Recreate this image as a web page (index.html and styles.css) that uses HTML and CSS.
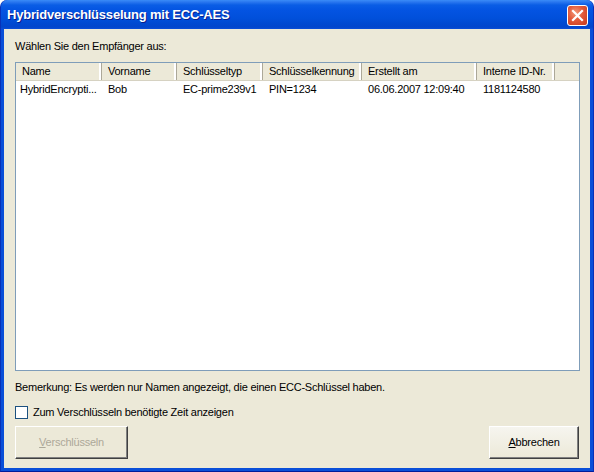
FILE: index.html
```
<!DOCTYPE html>
<html>
<head>
<meta charset="utf-8">
<link rel="stylesheet" href="styles.css">
</head>
<body>
<div class="window">
  <div class="titlebar">
    <span class="title">Hybridverschlüsselung mit ECC-AES</span>
    <span class="close"><svg width="13" height="13" viewBox="0 0 13 13"><path d="M2 2 L11 11 M11 2 L2 11" stroke="#fff" stroke-width="2.2" stroke-linecap="square"/></svg></span>
  </div>
  <div class="client">
    <div class="prompt">Wählen Sie den Empfänger aus:</div>
    <div class="list">
      <div class="header">
        <div class="hcell c1">Name</div>
        <div class="hcell c2">Vorname</div>
        <div class="hcell c3">Schlüsseltyp</div>
        <div class="hcell c4">Schlüsselkennung</div>
        <div class="hcell c5">Erstellt am</div>
        <div class="hcell c6">Interne ID-Nr.</div>
        <div class="hcell c7"></div>
      </div>
      <div class="row">
        <div class="cell c1 first">HybridEncrypti...</div>
        <div class="cell c2">Bob</div>
        <div class="cell c3">EC-prime239v1</div>
        <div class="cell c4">PIN=1234</div>
        <div class="cell c5">06.06.2007 12:09:40</div>
        <div class="cell c6">1181124580</div>
      </div>
    </div>
    <div class="note">Bemerkung: Es werden nur Namen angezeigt, die einen ECC-Schlüssel haben.</div>
    <label class="check"><span class="box"></span>Zum Verschlüsseln benötigte Zeit anzeigen</label>
    <div class="buttons">
      <div class="btn disabled"><u>V</u>erschlüsseln</div>
      <div class="btn"><u>A</u>bbrechen</div>
    </div>
  </div>
</div>
</body>
</html>
```
FILE: styles.css
```
html, body { margin: 0; padding: 0; }
body { width: 594px; height: 472px; overflow: hidden; font-family: Tahoma, "Liberation Sans", Arial, sans-serif; font-size: 11px; letter-spacing: -0.24px; color: #000; }
.window {
  width: 594px; height: 472px; box-sizing: border-box;
  background: #0a4fd8;
  display: flex; flex-direction: column;
  border-radius: 7px 7px 0 0;
  border-left: 1px solid #0831b8; border-right: 1px solid #0831b8; border-bottom: 1px solid #001c9a;
  padding: 0 3px 3px 3px;
}
.titlebar {
  height: 29px; flex: none;
  margin: 0 -3px;
  border-radius: 7px 7px 0 0;
  background: linear-gradient(to bottom, #3a8cf8 0px, #2a77ef 2px, #0a5de5 5px, #0454e2 10px, #0150db 18px, #0049d0 24px, #0246cc 27px, #0a4fd8 29px);
  display: flex; align-items: center; justify-content: space-between;
  padding: 0 5px 0 6px;
}
.title {
  color: #fff; font-family: "Liberation Sans", Arial, sans-serif; font-weight: bold; font-size: 13px;
  text-shadow: 1px 1px 0 #0a1e8c;
  letter-spacing: -0.2px;
}
.close {
  width: 19px; height: 19px; border: 1px solid #fff; border-radius: 3px;
  background: radial-gradient(circle at 40% 35%, #f39a7a 0%, #e2593a 45%, #c63a1c 100%);
  display: flex; align-items: center; justify-content: center;
  margin-top: 1px;
}
.client {
  flex: 1; background: #ece9d8;
  padding: 11px 10px 0 11px;
  display: flex; flex-direction: column;
}
.prompt { height: 13px; line-height: 13px; margin-bottom: 9px; }
.list {
  height: 309px; box-sizing: border-box;
  border: 1px solid #7f9db9; background: #fff;
  display: flex; flex-direction: column;
}
.header { display: flex; height: 17px; flex: none; background: #ece9d8; border-bottom: 1px solid #d6d2c2; }
.hcell {
  box-sizing: border-box; height: 17px; line-height: 16px; padding-left: 6px;
  border-right: 1px solid #aca899; box-shadow: inset -2px 0 0 #fff;
  white-space: nowrap; overflow: hidden;
}
.hcell.c7 { flex: 1; border-right: none; box-shadow: none; }
.row { display: flex; height: 17px; line-height: 17px; }
.cell { box-sizing: border-box; padding-left: 6px; white-space: nowrap; overflow: hidden; }
.cell.first { padding-left: 4px; }
.c1 { width: 86px; }
.c2 { width: 75px; }
.c3 { width: 86px; }
.c4 { width: 99px; }
.c5 { width: 115px; }
.c6 { width: 78px; }
.note { margin-top: 10px; height: 13px; line-height: 13px; }
.check { display: flex; align-items: center; margin-top: 12px; height: 13px; line-height: 13px; }
.box {
  width: 11px; height: 11px; border: 1px solid #1c5180; background: #fff;
  margin-right: 5px; box-sizing: content-box;
}
.buttons { display: flex; justify-content: space-between; margin-top: 7px; }
.btn {
  box-sizing: border-box; height: 33px; line-height: 31px; text-align: center;
  width: 90px; margin-right: 1px;
  border: 1px solid #fff; border-right-color: #404040; border-bottom-color: #404040;
  box-shadow: inset -1px -1px 0 #808080;
  background: linear-gradient(to bottom, #f6f5ef 0%, #ece9d8 100%);
}
.btn.disabled {
  width: 113px; color: #aca899;
  border-left-color: #fff; border-top-color: #fff;
  background: #ece9d8;
}
```
